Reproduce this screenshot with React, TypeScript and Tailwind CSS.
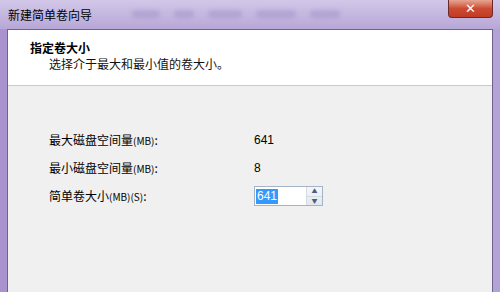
import React from "react";

export default function App() {
  const font = { fontFamily: '"Noto Sans CJK SC", "Liberation Sans", sans-serif' };
  return (
    <div className="w-[500px] h-[292px] overflow-hidden bg-gradient-to-r from-[#a893cf] via-[#bcaedb] to-[#b3a2d6] flex flex-col" style={font}>
      {/* title bar */}
      <div className="h-[29px] flex items-start bg-gradient-to-b from-[#d2c7e8] to-[#b7a7d7]">
        <div className="pl-[8px] pt-[7px] text-[12px] leading-[16px] text-black">新建简单卷向导</div>
        <div className="flex-1 flex gap-[14px] pl-[40px] pt-[10px] opacity-25">
          <div className="w-[28px] h-[8px] bg-[#7d6aae] rounded-full blur-[2px]" />
          <div className="w-[20px] h-[8px] bg-[#7d6aae] rounded-full blur-[2px]" />
          <div className="w-[34px] h-[8px] bg-[#7d6aae] rounded-full blur-[2px]" />
          <div className="w-[40px] h-[8px] bg-[#7d6aae] rounded-full blur-[2px]" />
          <div className="w-[30px] h-[8px] bg-[#7d6aae] rounded-full blur-[2px]" />
        </div>
        <div className="mr-[7px] w-[45px] h-[18px] rounded-b-[4px] border border-[#6b2a2a] border-t-0 bg-gradient-to-b from-[#e5a593] via-[#cc4b33] to-[#c23a22] flex items-center justify-center">
          <span className="text-white text-[13px] font-bold leading-none" style={{ fontFamily: '"DejaVu Sans", sans-serif' }}>✕</span>
        </div>
      </div>
      {/* body */}
      <div className="flex-1 flex px-[7px] pb-0">
        <div className="flex-1 flex flex-col border border-[#6f6190] border-b-0 bg-[#f0f0f0]">
          <div className="h-[56px] bg-white border-b border-[#c9c9c9] pl-[22px] pt-[10px]">
            <div className="text-[12px] leading-[16px] font-bold text-black">指定卷大小</div>
            <div className="pl-[19px] text-[12px] leading-[16px] text-[#111]">选择介于最大和最小值的卷大小。</div>
          </div>
          <div className="flex-1 pl-[41px] pt-[40px] text-[12px] text-black">
            <div className="flex h-[28px] items-center">
              <div className="w-[205px]">最大磁盘空间量<span className="text-[10px]">(MB)</span>:</div>
              <div style={{ fontFamily: '"Liberation Sans", sans-serif' }}>641</div>
            </div>
            <div className="flex h-[28px] items-center">
              <div className="w-[205px]">最小磁盘空间量<span className="text-[10px]">(MB)</span>:</div>
              <div style={{ fontFamily: '"Liberation Sans", sans-serif' }}>8</div>
            </div>
            <div className="flex h-[28px] items-center">
              <div className="w-[205px]">简单卷大小<span className="text-[10px]">(MB)(S)</span>:</div>
              <div className="flex w-[69px] h-[20px] border border-[#a5b3c7] bg-white">
                <div className="flex-1 flex items-center pl-[1px]">
                  <span className="bg-[#3399ff] text-white px-[1px] leading-[15px]" style={{ fontFamily: '"Liberation Sans", sans-serif' }}>641</span>
                </div>
                <div className="w-[16px] flex flex-col border-l border-[#d5dbe3] bg-gradient-to-b from-[#f4f6f9] to-[#e3e8ee]">
                  <div className="flex-1 flex items-center justify-center text-[6px] text-[#4a5d7e] leading-none border-b border-[#d5dbe3]">▲</div>
                  <div className="flex-1 flex items-center justify-center text-[6px] text-[#4a5d7e] leading-none">▼</div>
                </div>
              </div>
            </div>
          </div>
        </div>
      </div>
    </div>
  );
}
